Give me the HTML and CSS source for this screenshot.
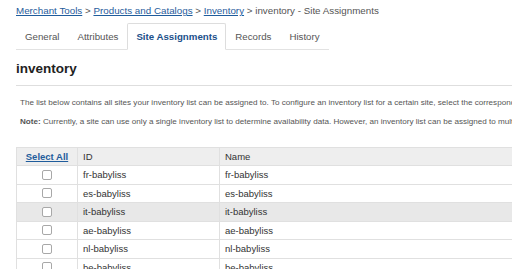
FILE: index.html
```html
<!DOCTYPE html>
<html lang="en">
<head>
    <meta charset="UTF-8">
    <meta name="viewport" content="width=device-width, initial-scale=1.0">
    <title>inventory - Site Assignments</title>
    <link rel="stylesheet" href="styles.css">
</head>
<body>
    <div class="page">
        <div class="crumbs">
            <a href="#">Merchant Tools</a> &gt;
            <a href="#">Products and Catalogs</a> &gt;
            <a href="#">Inventory</a> &gt; inventory - Site Assignments
        </div>

        <div class="tabs">
            <div class="tab">General</div>
            <div class="tab">Attributes</div>
            <div class="tab active">Site Assignments</div>
            <div class="tab">Records</div>
            <div class="tab">History</div>
        </div>

        <h1>inventory</h1>
        <hr>

        <p class="info">The list below contains all sites your inventory list can be assigned to. To configure an inventory list for a certain site, select the corresponding checkbox and click Apply.</p>
        <p class="info"><b>Note:</b> Currently, a site can use only a single inventory list to determine availability data. However, an inventory list can be assigned to multiple sites.</p>

        <table class="sites">
            <tr class="head">
                <th class="sel"><a href="#">Select All</a></th>
                <th class="id">ID</th>
                <th>Name</th>
            </tr>
            <tr>
                <td class="sel"><input type="checkbox"></td>
                <td>fr-babyliss</td>
                <td>fr-babyliss</td>
            </tr>
            <tr>
                <td class="sel"><input type="checkbox"></td>
                <td>es-babyliss</td>
                <td>es-babyliss</td>
            </tr>
            <tr class="hover">
                <td class="sel"><input type="checkbox"></td>
                <td>it-babyliss</td>
                <td>it-babyliss</td>
            </tr>
            <tr>
                <td class="sel"><input type="checkbox"></td>
                <td>ae-babyliss</td>
                <td>ae-babyliss</td>
            </tr>
            <tr>
                <td class="sel"><input type="checkbox"></td>
                <td>nl-babyliss</td>
                <td>nl-babyliss</td>
            </tr>
            <tr>
                <td class="sel"><input type="checkbox"></td>
                <td>be-babyliss</td>
                <td>be-babyliss</td>
            </tr>
        </table>
    </div>
</body>
</html>
```

FILE: styles.css
```css
body {
    margin: 0;
    font-family: "Liberation Sans", Arial, sans-serif;
    color: #333;
    background: #fff;
    overflow: hidden;
}

.page {
    padding-left: 16px;
    width: 700px;
}

a {
    color: #1f5c9c;
}

.crumbs {
    margin-top: 5px;
    font-size: 9.8px;
    line-height: 12px;
    color: #555;
}

.tabs {
    display: flex;
    width: fit-content;
    margin-top: 7px;
    border-bottom: 1px solid #e2e2e2;
    white-space: nowrap;
}

.tab {
    flex-shrink: 0;
    padding: 0 9px;
    height: 25px;
    line-height: 25px;
    font-size: 9.7px;
    color: #555;
}

.tab.active {
    border: 1px solid #ddd;
    border-bottom: 1px solid #fff;
    border-radius: 2px 2px 0 0;
    margin-bottom: -1px;
    padding: 0 8px;
    height: 25px;
    line-height: 25px;
    margin-top: -1px;
    color: #1b4f8a;
    font-weight: bold;
    background: #fff;
}

h1 {
    margin: 10px 0 0;
    font-size: 13.5px;
    line-height: 17px;
    color: #222;
}

hr {
    margin: 8px 0 0;
    border: 0;
    border-top: 1px solid #dedede;
}

.info {
    margin: 12px 0 0 4px;
    font-size: 8.1px;
    line-height: 10px;
    color: #555;
    white-space: nowrap;
}

.info + .info {
    margin-top: 9px;
}

.sites {
    margin-top: 20px;
    width: 640px;
    border-collapse: collapse;
    font-size: 9.5px;
}

.sites th,
.sites td {
    border: 1px solid #e0e0e0;
    padding: 0 5px;
    height: 17.5px;
    text-align: left;
    font-weight: normal;
    color: #333;
}

.sites .head th {
    background: #eee;
    height: 17px;
}

.sites .sel {
    width: 50px;
    text-align: center;
}

.sites .sel a {
    font-weight: bold;
}

.sites .id {
    width: 131px;
}

.sites .hover td {
    background: #e8e8e8;
}

input[type="checkbox"] {
    appearance: none;
    -webkit-appearance: none;
    display: block;
    margin: 0 auto;
    width: 10px;
    height: 10px;
    border: 1px solid #a8a8a8;
    border-radius: 2px;
    background: #fff;
}
```
